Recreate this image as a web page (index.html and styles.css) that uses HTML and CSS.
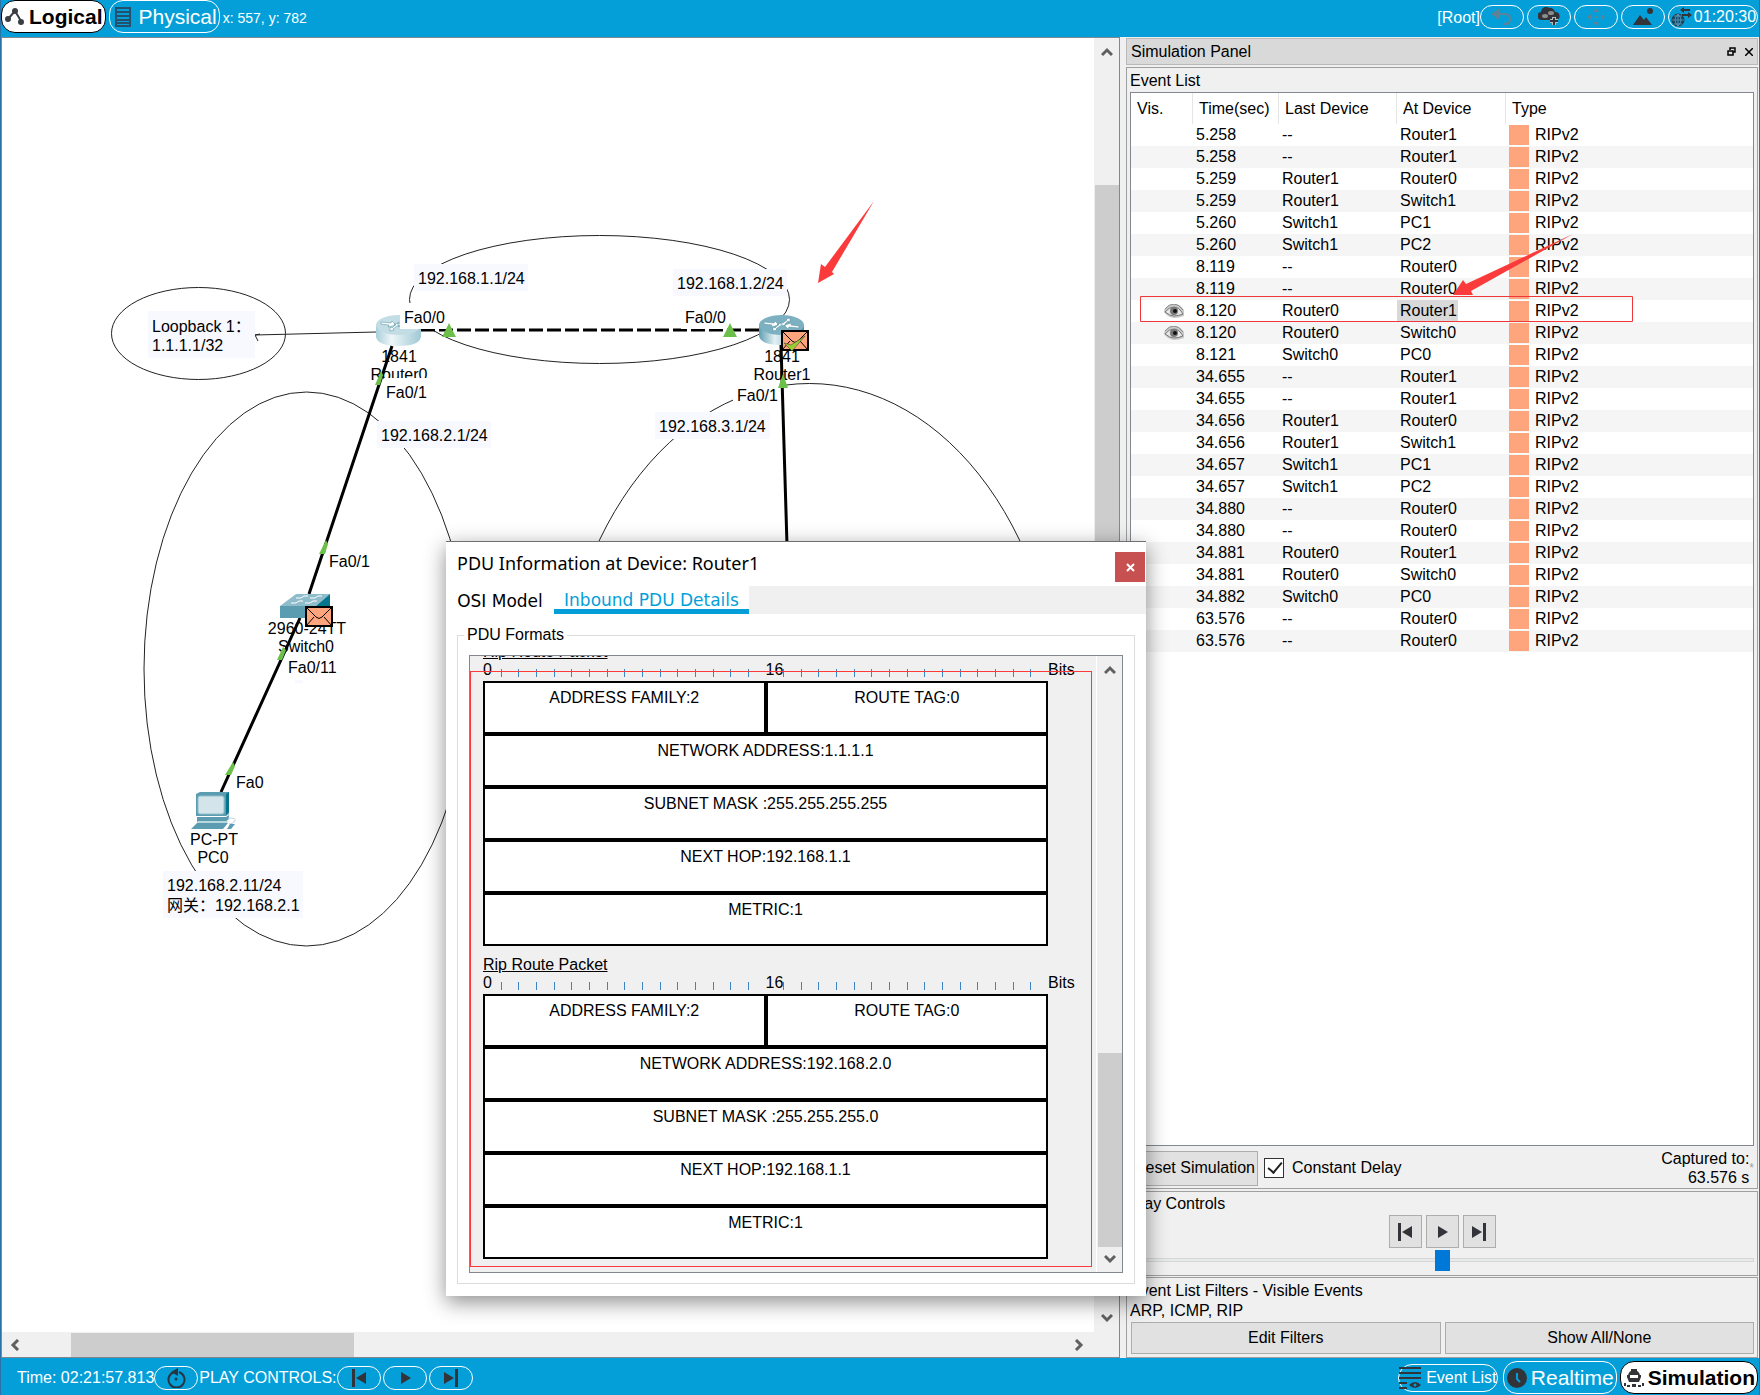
FILE: index.html
```html
<!DOCTYPE html>
<html lang="en">
<head>
<meta charset="utf-8">
<title>Simulation workspace</title>
<link rel="stylesheet" href="styles.css">
</head>
<body>
<svg class="defs" aria-hidden="true">
  <defs>
    <linearGradient id="side" x1="0" x2="1"><stop offset="0" stop-color="#5f9fb2"/><stop offset=".35" stop-color="#e4f0f4"/><stop offset=".6" stop-color="#a9cdd8"/><stop offset="1" stop-color="#4f93a8"/></linearGradient>
    <linearGradient id="side-pale" x1="0" x2="1"><stop offset="0" stop-color="#a9cfdb"/><stop offset=".35" stop-color="#eef6f8"/><stop offset=".6" stop-color="#cfe4ea"/><stop offset="1" stop-color="#a0c8d5"/></linearGradient>
  </defs>
  <symbol id="router-arrows" viewBox="0 0 45 31">
    <path d="M5 7l10 1 1-2 4 4-8 2 1-2-8-1zM40 13l-10-1-1 2-4-4 8-2-1 2 8 1zM31 3l-4 1 1 1-4 3-2-1 0 4 5-1-1-1 3-3 2 1zM14 16l4-1-1-1 4-3 2 1 0-4-5 1 1 1-3 3-2-1z" fill="#fff" stroke="#4c8ea3" stroke-width=".5"/>
  </symbol>
  <symbol id="envelope" viewBox="0 0 28 21">
    <path d="M1 1h26v19H1z" fill="#ffa57d" stroke="#000" stroke-width="2"/>
    <path d="M1 1l10 10q3 3 6 0L27 1M1 20l8-9M27 20l-8-9" fill="none" stroke="#000" stroke-width="1"/>
  </symbol>
  <symbol id="back" viewBox="0 0 16 18"><path d="M1 0h3v18H1zM15 3v12L5 9z" fill="#32343a"/></symbol>
  <symbol id="play" viewBox="0 0 16 18"><path d="M4 3v12l10-6z" fill="#32343a"/></symbol>
  <symbol id="next" viewBox="0 0 16 18"><path d="M12 0h3v18h-3zM1 3v12l10-6z" fill="#32343a"/></symbol>
  <symbol id="eye" viewBox="0 0 20 14">
    <path d="M0 6Q4 0 10 0t10 6v6q-5 2-10 2Q3 13 0 8z" fill="#c9c9c9"/>
    <path d="M1 8q4-5 9-5t9 7q-5 2-9 2T1 8z" fill="#e6e6e6" stroke="#777"/>
    <path d="M1 5q4-5 9-5t9 6" fill="none" stroke="#888"/>
    <circle cx="10" cy="7" r="4" fill="#777"/><circle cx="11" cy="7" r="2" fill="#111"/>
  </symbol>
  <symbol id="chev" viewBox="0 0 12 10"><path d="M1 8l5-5 5 5" fill="none" stroke="#606060" stroke-width="3"/></symbol>
</svg>

<header class="bar">
  <button class="mode mode-on" type="button">
    <svg width="20" height="18" viewBox="0 0 20 18"><path d="M3 11L10 3l6 10" fill="none" stroke="#3b3f45" stroke-width="2"/><circle cx="3" cy="11" r="3" fill="#3b3f45"/><circle cx="10" cy="3" r="3" fill="#3b3f45"/><circle cx="16" cy="14" r="3" fill="#3b3f45"/></svg>
    Logical</button>
  <button class="mode" type="button">
    <svg width="22" height="20" viewBox="-2 0 22 20"><path d="M1 1h14v18H1zM1 5h14M1 9h14M1 13h14M1 16h14" fill="none" stroke="#23506b" stroke-width="2"/></svg>
    Physical</button>
  <span class="coords">x: 557, y: 782</span>
  <span class="grow"></span>
  <span class="root">[Root]</span>
  <button class="pill" type="button" aria-label="Back"><svg width="22" height="18" viewBox="0 0 22 18"><path d="M8 6h6q5 0 5 5t-5 5h-2" fill="none" stroke="#5f8296" stroke-width="2"/><path d="M0 6l9-6v12z" fill="#5f8296"/></svg></button>
  <button class="pill" type="button" aria-label="New cluster"><svg width="22" height="20" viewBox="0 0 22 20"><path d="M4 13a4 4 0 0 1-1-8 5 5 0 0 1 8-4 5 5 0 0 1 6 4 4 4 0 0 1 1 8z" fill="#32343a"/><ellipse cx="7" cy="9" rx="3" ry="2" fill="#8c8c8c"/><ellipse cx="13" cy="6" rx="3" ry="2" fill="#8c8c8c"/><path d="M16 10v8M12 14h8" stroke="#bbb" stroke-width="4"/><path d="M16 11v7M12 14h8" stroke="#32343a" stroke-width="2"/></svg></button>
  <button class="pill" type="button" aria-label="Move object"><svg width="20" height="20" viewBox="0 0 20 20"><path d="M10 1l3 4H7zM10 19l3-4H7zM1 10l4-3v6zM19 10l-4-3v6zM9 9h2v2H9z" fill="#5f8296"/></svg></button>
  <button class="pill" type="button" aria-label="Set background"><svg width="20" height="18" viewBox="0 0 20 18"><path d="M0 17l7-10 4 5 2-3 6 8z" fill="#32343a"/><circle cx="17" cy="3" r="3" fill="#32343a"/></svg></button>
  <button class="pill pill-clock" type="button"><svg width="22" height="20" viewBox="0 0 22 20"><circle cx="8" cy="13" r="6" fill="#0f4b6b" stroke="#263640" stroke-width="1"/><path d="M2 13h12M8 7v12M4 9h8M4 17h8M8 7q-6 6 0 12M8 7q6 6 0 12" fill="none" stroke="#7fb6d0" stroke-width=".6"/><path d="M12 3h8M12 8h8" stroke="#32343a" stroke-width="2"/><path d="M14 0v6l-4-3zM18 5v6l4-3z" fill="#32343a"/></svg>01:20:30</button>
</header>

<main class="workspace">
  <section class="stage">
    <div class="canvas">
      <svg class="topology" width="1092" height="1294" viewBox="2 38 1092 1294">
        <g class="outline">
          <ellipse cx="198.500" cy="333.500" rx="87" ry="46"/>
          <ellipse cx="599.500" cy="299.500" rx="190" ry="64"/>
          <ellipse cx="306.500" cy="669" rx="162.500" ry="277"/>
          <ellipse cx="809.500" cy="733.500" rx="252" ry="350"/>
          <path d="M258 341l-3-6 5-1M255 335l121-3"/>
        </g>
        <g class="note">
          <path d="M148 311h107v47H148zM414 264h114v27H414zM673 269h114v27H673zM377 421h114v27H377zM655 412h115v27H655zM163 871h140v47H163zM295 680h8v3h-8z"/>
        </g>
        <!-- Router0 -->
        <g>
          <path d="M376 325v12q2 9 22.500 9T421 337v-12z" fill="url(#side-pale)"/>
          <ellipse cx="398.500" cy="325" rx="22.500" ry="10" fill="#c3dde5"/>
          <use href="#router-arrows" x="376" y="315" width="45" height="31"/>
        </g>
        <text x="399" y="362" class="mid">1841</text><text x="399" y="380" class="mid">Router0</text>
        <path class="mask" d="M384 378h48v25h-48z"/>
        <path class="cable dashed" d="M421 330h340"/>
        <path class="mask" d="M400 303h47v26h-47zM681 303h42v26h-42zM733 383h46v25h-46z"/>
        <!-- Router1 -->
        <g>
          <path d="M759 325v11q2 9 22.500 9T804 336v-11z" fill="url(#side)"/>
          <ellipse cx="781.500" cy="325" rx="22.500" ry="10" fill="#7db0c0"/>
          <use href="#router-arrows" x="759" y="315" width="45" height="31"/>
        </g>
        <text x="782" y="362" class="mid">1841</text><text x="782" y="380" class="mid">Router1</text>
        <text x="307" y="634" class="mid">2960-24TT</text><text x="306" y="652" class="mid">Switch0</text>
        <g class="cable">
          <path d="M392 346L309 594M300 618L221 792M781 345L787 545"/>
        </g>
        <g class="link-up">
          <path d="M442 337l7-14 7 14zM723 337l7-14 7 14zM375 385l6-14 2 4-3 10zM319 554l7-14 2 4-3 10zM277 660l6-13 3 3-4 10zM225 775l8-13 2 4-4 9zM778 388l5-14 5 14z"/>
        </g>
        <!-- Switch0 -->
        <path d="M280 606l16-12h34l-14 12z" fill="#8fbccb"/><path d="M280 606h36v12h-36z" fill="#5c9cb1"/><path d="M316 606l14-12v12l-14 12z" fill="#04758c"/>
        <path d="M296 598h5l3-2h4M310 598h5l3-2h4M291 603h5l3-2h4M305 603h5l3-2h4" fill="none" stroke="#fff" stroke-width="1"/>
        <use href="#envelope" x="305" y="606" width="28" height="21"/>
        <use href="#envelope" x="781" y="330" width="28" height="21"/>
        <path d="M784 343l7 2 14-9-13 15z" fill="#9acd32" stroke="#333" stroke-width=".5"/>
        <!-- PC0 -->
        <path d="M196 794l4-2h29v22l-3 2h-30z" fill="#5c9cb1"/><path d="M226 794l3-2v20l-3 3z" fill="#04758c"/>
        <rect x="198" y="796" width="26" height="18" rx="2" fill="#d3e4ea" stroke="#8fbccb"/>
        <path d="M197 817h29l3-2v4l-4 3h-28zM191 829l6-6h31l-5 6z" fill="#5c9cb1"/><path d="M197 823l1-2h30l-1 2z" fill="#b8d6df"/>
        <path d="M228 818q9 0 7 3t-6 3" fill="none" stroke="#b8d6df"/><path d="M227 829l3-5h5l-4 5z" fill="#5c9cb1"/>
        <text x="214" y="845" class="mid">PC-PT</text><text x="213" y="863" class="mid">PC0</text>

        <text x="152" y="332">Loopback 1：</text><text x="152" y="351">1.1.1.1/32</text>
        <text x="418" y="284">192.168.1.1/24</text><text x="677" y="289">192.168.1.2/24</text>
        <text x="381" y="441">192.168.2.1/24</text><text x="659" y="432">192.168.3.1/24</text>
        <text x="167" y="891">192.168.2.11/24</text><text x="167" y="911">网关：192.168.2.1</text>
        <text x="404" y="323">Fa0/0</text><text x="685" y="323">Fa0/0</text>
        <text x="386" y="398">Fa0/1</text><text x="737" y="401">Fa0/1</text>
        <text x="329" y="567">Fa0/1</text><text x="288" y="673">Fa0/11</text><text x="236" y="788">Fa0</text>
      </svg>
    </div>
    <div class="vscroll"><svg class="chev"><use href="#chev"/></svg><i class="thumb"></i><svg class="chev down"><use href="#chev"/></svg></div>
    <div class="hscroll"><svg class="chev left"><use href="#chev"/></svg><i class="thumb"></i><svg class="chev right"><use href="#chev"/></svg></div>
  </section>

  <aside class="panel">
    <div class="panel-title"><span>Simulation Panel</span>
      <button class="plain" type="button" aria-label="Float"><svg width="9" height="9" viewBox="0 0 9 9"><path d="M3 3V1h5v4H6M1 4h5v4H1z" fill="none" stroke="#000" stroke-width="1.500"/></svg></button>
      <button class="plain" type="button" aria-label="Close panel"><svg width="8" height="8" viewBox="0 0 8 8"><path d="M0 0l8 8M8 0L0 8" stroke="#000" stroke-width="1.500"/></svg></button>
    </div>

    <section class="group events">
      <h2>Event List</h2>
      <div class="list">
        <table>
          <colgroup><col class="c-vis"><col class="c-time"><col class="c-last"><col class="c-at"><col></colgroup>
          <thead><tr><th>Vis.</th><th>Time(sec)</th><th>Last Device</th><th>At Device</th><th>Type</th></tr></thead>
          <tbody>
            <tr><td></td><td>5.258</td><td>--</td><td>Router1</td><td class="type">RIPv2</td></tr>
            <tr><td></td><td>5.258</td><td>--</td><td>Router1</td><td class="type">RIPv2</td></tr>
            <tr><td></td><td>5.259</td><td>Router1</td><td>Router0</td><td class="type">RIPv2</td></tr>
            <tr><td></td><td>5.259</td><td>Router1</td><td>Switch1</td><td class="type">RIPv2</td></tr>
            <tr><td></td><td>5.260</td><td>Switch1</td><td>PC1</td><td class="type">RIPv2</td></tr>
            <tr><td></td><td>5.260</td><td>Switch1</td><td>PC2</td><td class="type">RIPv2</td></tr>
            <tr><td></td><td>8.119</td><td>--</td><td>Router0</td><td class="type">RIPv2</td></tr>
            <tr><td></td><td>8.119</td><td>--</td><td>Router0</td><td class="type">RIPv2</td></tr>
            <tr><td class="vis"><svg width="20" height="14"><use href="#eye"/></svg></td><td>8.120</td><td>Router0</td><td class="picked"><span>Router1</span></td><td class="type">RIPv2</td></tr>
            <tr><td class="vis"><svg width="20" height="14"><use href="#eye"/></svg></td><td>8.120</td><td>Router0</td><td>Switch0</td><td class="type">RIPv2</td></tr>
            <tr><td></td><td>8.121</td><td>Switch0</td><td>PC0</td><td class="type">RIPv2</td></tr>
            <tr><td></td><td>34.655</td><td>--</td><td>Router1</td><td class="type">RIPv2</td></tr>
            <tr><td></td><td>34.655</td><td>--</td><td>Router1</td><td class="type">RIPv2</td></tr>
            <tr><td></td><td>34.656</td><td>Router1</td><td>Router0</td><td class="type">RIPv2</td></tr>
            <tr><td></td><td>34.656</td><td>Router1</td><td>Switch1</td><td class="type">RIPv2</td></tr>
            <tr><td></td><td>34.657</td><td>Switch1</td><td>PC1</td><td class="type">RIPv2</td></tr>
            <tr><td></td><td>34.657</td><td>Switch1</td><td>PC2</td><td class="type">RIPv2</td></tr>
            <tr><td></td><td>34.880</td><td>--</td><td>Router0</td><td class="type">RIPv2</td></tr>
            <tr><td></td><td>34.880</td><td>--</td><td>Router0</td><td class="type">RIPv2</td></tr>
            <tr><td></td><td>34.881</td><td>Router0</td><td>Router1</td><td class="type">RIPv2</td></tr>
            <tr><td></td><td>34.881</td><td>Router0</td><td>Switch0</td><td class="type">RIPv2</td></tr>
            <tr><td></td><td>34.882</td><td>Switch0</td><td>PC0</td><td class="type">RIPv2</td></tr>
            <tr><td></td><td>63.576</td><td>--</td><td>Router0</td><td class="type">RIPv2</td></tr>
            <tr><td></td><td>63.576</td><td>--</td><td>Router0</td><td class="type">RIPv2</td></tr>
          </tbody>
        </table>
      </div>
      <div class="capture">
        <button class="push" type="button">Reset Simulation</button>
        <label class="delay"><input type="checkbox" checked>Constant Delay</label>
        <span class="grow"></span>
        <p>Captured to:<br>63.576 s</p><span class="star">*</span>
      </div>
    </section>

    <section class="group play">
      <h2>Play Controls</h2>
      <div class="steps">
        <button class="push" type="button" aria-label="Step back"><svg width="16" height="18"><use href="#back"/></svg></button>
        <button class="push" type="button" aria-label="Play"><svg width="16" height="18"><use href="#play"/></svg></button>
        <button class="push" type="button" aria-label="Step forward"><svg width="16" height="18"><use href="#next"/></svg></button>
      </div>
      <input class="speed" type="range" min="0" max="100" value="50" aria-label="Play speed">
    </section>

    <section class="group filters">
      <h2>Event List Filters - Visible Events</h2>
      <p>ARP, ICMP, RIP</p>
      <div class="pair"><button class="push" type="button">Edit Filters</button><button class="push" type="button">Show All/None</button></div>
    </section>
  </aside>
</main>

<footer class="bar bar-bottom">
  <span class="time">Time: 02:21:57.813</span>
  <button class="pill pill-cycle" type="button" aria-label="Power cycle"><svg width="20" height="20" viewBox="0 0 20 20"><path d="M8 4a8 8 0 1 0 5 0" fill="none" stroke="#263640" stroke-width="2"/><path d="M5 4l7-4v8z" fill="#263640"/><circle cx="10" cy="11" r="1.500" fill="#263640"/></svg></button>
  <span>PLAY CONTROLS:</span>
  <span class="pills">
    <button class="pill" type="button" aria-label="Back"><svg width="16" height="18"><use href="#back"/></svg></button>
    <button class="pill" type="button" aria-label="Play"><svg width="16" height="18"><use href="#play"/></svg></button>
    <button class="pill" type="button" aria-label="Forward"><svg width="16" height="18"><use href="#next"/></svg></button>
  </span>
  <span class="grow"></span>
  <button class="pill pill-list" type="button"><svg width="22" height="22" viewBox="0 0 22 22"><path d="M0 1h22M0 6h22M0 11h22M0 16h8M0 21h8" stroke="#32343a" stroke-width="2"/><path d="M10 18q6-6 12 0-6 6-12 0z" fill="#32343a"/><circle cx="16" cy="18" r="1.500" fill="#049fd9"/></svg>Event List</button>
  <button class="mode" type="button"><svg width="20" height="20" viewBox="0 0 20 20"><circle cx="10" cy="10" r="10" fill="#32343a"/><path d="M10 5v6l3 3" fill="none" stroke="#049fd9" stroke-width="2"/></svg>Realtime</button>
  <button class="mode mode-on" type="button"><svg width="20" height="20" viewBox="0 0 20 20"><path d="M7 1h6v2H7z" fill="#32343a"/><circle cx="10" cy="8" r="6" fill="#32343a"/><path d="M3 7h14v2l-2 5H5L3 9z" fill="#32343a"/><path d="M6 7h8v3H6z" fill="#fff"/><path d="M0 15h2v3H0zM18 15h2v3h-2zM3 17h3v2H3zM8 16h4v3H8zM14 17h3v2h-3z" fill="#32343a"/></svg>Simulation</button>
</footer>

<svg class="markup" width="1760" height="700" viewBox="0 0 1760 700" aria-hidden="true">
  <path d="M818 283l3-19 4 3 49-66-42 71 2 2zM1453 295l10-15 3 4 107-50-102 57 2 4z" fill="#fb3b3b"/>
  <path d="M1140.500 296.500h492v25h-492z" fill="none" stroke="#f0383c"/>
</svg>

<div class="dialog" role="dialog" aria-labelledby="pdu-title">
  <div class="dialog-head"><h1 id="pdu-title">PDU Information at Device: Router1</h1><button class="close" type="button" aria-label="Close"><svg width="9" height="9" viewBox="0 0 9 9"><path d="M1 1l7 7M8 1L1 8" stroke="#fff" stroke-width="2"/></svg></button></div>
  <div class="tabs" role="tablist"><button role="tab" type="button">OSI Model</button><button role="tab" type="button" class="tab-on" aria-selected="true">Inbound PDU Details</button></div>
  <fieldset>
    <legend>PDU Formats</legend>
    <div class="formats">
      <div class="packets">
        <section class="packet">
          <h3>Rip Route Packet</h3>
          <div class="ruler"><div class="scale"><span>0</span><span>16</span><svg class="ticks" viewBox="0 0 565 8" preserveAspectRatio="none"><path d="M18.500 0v8M35.500 0v8M53.500 0v8M71.500 0v8M88.500 0v8M106.500 0v8M124.500 0v8M141.500 0v8M159.500 0v8M177.500 0v8M194.500 0v8M212.500 0v8M230.500 0v8M247.500 0v8M265.500 0v8M300.500 0v8M318.500 0v8M335.500 0v8M353.500 0v8M371.500 0v8M388.500 0v8M406.500 0v8M424.500 0v8M441.500 0v8M459.500 0v8M477.500 0v8M494.500 0v8M512.500 0v8M530.500 0v8M547.500 0v8"/></svg></div><span>Bits</span></div>
          <div class="fields"><p>ADDRESS FAMILY:2</p><p>ROUTE TAG:0</p><p class="wide">NETWORK ADDRESS:1.1.1.1</p><p class="wide">SUBNET MASK :255.255.255.255</p><p class="wide">NEXT HOP:192.168.1.1</p><p class="wide">METRIC:1</p></div>
        </section>
        <section class="packet">
          <h3>Rip Route Packet</h3>
          <div class="ruler"><div class="scale"><span>0</span><span>16</span><svg class="ticks" viewBox="0 0 565 8" preserveAspectRatio="none"><path d="M18.500 0v8M35.500 0v8M53.500 0v8M71.500 0v8M88.500 0v8M106.500 0v8M124.500 0v8M141.500 0v8M159.500 0v8M177.500 0v8M194.500 0v8M212.500 0v8M230.500 0v8M247.500 0v8M265.500 0v8M300.500 0v8M318.500 0v8M335.500 0v8M353.500 0v8M371.500 0v8M388.500 0v8M406.500 0v8M424.500 0v8M441.500 0v8M459.500 0v8M477.500 0v8M494.500 0v8M512.500 0v8M530.500 0v8M547.500 0v8"/></svg></div><span>Bits</span></div>
          <div class="fields"><p>ADDRESS FAMILY:2</p><p>ROUTE TAG:0</p><p class="wide">NETWORK ADDRESS:192.168.2.0</p><p class="wide">SUBNET MASK :255.255.255.0</p><p class="wide">NEXT HOP:192.168.1.1</p><p class="wide">METRIC:1</p></div>
        </section>
        <i class="frame-mark"></i>
      </div>
      <div class="vscroll"><svg class="chev"><use href="#chev"/></svg><i class="thumb"></i><svg class="chev down"><use href="#chev"/></svg></div>
    </div>
  </fieldset>
</div>
</body>
</html>
```

FILE: styles.css
```css
* { box-sizing: border-box; }

body {
  margin: 0;
  min-height: 100vh;
  display: flex;
  flex-direction: column;
  position: relative;
  border: solid #2a72a8;
  border-width: 0 1px;
  background: #f0f0f0;
  color: #000;
  font: 16px/18px "Liberation Sans", "Noto Sans CJK SC", sans-serif;
}

h1, h2, h3, p { margin: 0; font-size: 16px; font-weight: 400; }
button, input { font: inherit; color: inherit; margin: 0; }
svg { display: block; flex: none; }
.defs { position: absolute; width: 0; height: 0; }
.grow { flex: 1; }

/* Blue bars */
.bar {
  height: 37px;
  display: flex;
  align-items: center;
  padding-right: 1px;
  background: #049fd9;
  color: #fff;
  white-space: nowrap;
}
.coords { padding-bottom: 2px; font-size: 14px; }
.root { padding-bottom: 2px; }
.mode {
  height: 33px;
  margin: 0 3px 4px 0;
  padding: 0 2px 0 3px;
  display: flex;
  align-items: center;
  gap: 4px;
  border: 1px solid #fff;
  border-radius: 14px;
  background: none;
  font-size: 21px;
}
.mode-on { border-color: #000; background: #fff; color: #000; font-weight: 700; }
.pill {
  width: 44px;
  height: 24px;
  margin: 0 3px 3px 0;
  padding: 0;
  display: flex;
  align-items: center;
  justify-content: center;
  border: 1px solid #fff;
  border-radius: 12px;
  background: none;
}
.pill-clock { width: 90px; gap: 2px; margin-right: 0; }
.pill-list { width: 100px; height: 28px; gap: 5px; border-radius: 14px; }
.bar-bottom { padding-top: 2px; }
.bar-bottom .mode { margin: 0 3px 0 0; }
.bar-bottom .mode:last-child { margin: 0; }
.bar-bottom .pill { margin-bottom: 0; }
.bar-bottom .pill-list { margin-right: 5px; }
.bar-bottom .pill-cycle { margin-right: 1px; }
.time { padding-left: 16px; }
.pills { display: flex; }
.pills .pill { margin-right: 2px; }

/* Workspace */
.workspace {
  flex: 1;
  display: grid;
  grid-template-columns: minmax(0, 1fr) 632px;
  gap: 6px;
  padding-right: 1px;
}
.stage {
  display: grid;
  grid-template-columns: minmax(0, 1fr) 25px;
  grid-template-rows: minmax(0, 1fr) 25px;
  border: 1px solid #828790;
}
.canvas { background: #fff; overflow: hidden; }
.topology text { font-size: 16px; }
.topology .mid { text-anchor: middle; }
.outline { fill: none; stroke: #222; stroke-width: 1; }
.note { fill: #f8f8ff; }
.mask { fill: #fff; }
.cable { fill: none; stroke: #000; stroke-width: 3; }
.dashed { stroke-dasharray: 14 4; }
.link-up { fill: #6cc04a; }

.vscroll, .hscroll { display: flex; align-items: center; background: #f0f0f0; }
.vscroll { flex-direction: column; padding: 9px 0; }
.vscroll .thumb { width: 24px; height: 600px; margin: 128px 0 auto; background: #cdcdcd; }
.hscroll { padding: 0 9px 0 7px; }
.hscroll .thumb { width: 283px; height: 24px; margin: 0 auto 0 50px; background: #cdcdcd; }
.chev { width: 12px; height: 10px; }
.down { transform: rotate(180deg); }
.left { transform: rotate(-90deg); }
.right { transform: rotate(90deg); }

/* Simulation panel */
.panel { display: flex; flex-direction: column; padding-top: 1px; }
.panel-title {
  height: 27px;
  margin-bottom: 2px;
  padding: 0 4px;
  display: flex;
  align-items: center;
  gap: 9px;
  border: 1px solid #b9b9b9;
  background: #d9d9d9;
}
.panel-title span { flex: 1; }
.plain { padding: 0; border: 0; background: none; }
.group { display: flex; flex-direction: column; border: 1px solid #a0a0a0; padding: 3px; }
.group h2 { line-height: 19px; }
.events { flex: 1; margin-bottom: 2px; padding-bottom: 1px; }
.events h2 { margin-bottom: 2px; }
.list { flex: 1; border: 1px solid #828790; background: #fff; }
table { width: 100%; table-layout: fixed; border-collapse: separate; border-spacing: 0; }
.c-vis { width: 62px; }
.c-time { width: 86px; }
.c-last { width: 118px; }
.c-at { width: 109px; }
th { height: 31px; padding: 0 0 0 6px; text-align: left; font-weight: 400; border-right: 1px solid #e5e5e5; }
th:last-child { border: 0; }
td { height: 22px; padding: 0 0 0 3px; }
tbody tr:nth-child(even) { background: #f5f5f5; }
.vis svg { margin-left: 30px; }
.picked { padding: 0; }
.picked span { display: block; width: 61px; padding-left: 3px; line-height: 22px; background: #d9d9d9; }
.type::before { content: ""; float: left; width: 20px; height: 20px; margin-right: 6px; background: #ffa57d; }
.type { line-height: 20px; }
.push { padding: 0; border: 1px solid #adadad; background: #e1e1e1; }
.capture { display: flex; align-items: center; padding-top: 3px; }
.capture .push { width: 127px; height: 35px; margin-left: 1px; }
.capture p { text-align: right; line-height: 19px; }
.delay { display: flex; align-items: center; gap: 8px; padding-left: 6px; }
.delay input {
  appearance: none;
  width: 20px;
  height: 20px;
  border: 1px solid #333;
  background: #fff;
}
.delay input:checked::after {
  content: "";
  display: block;
  width: 6px;
  height: 12px;
  margin: 0 0 0 6px;
  border: solid #222;
  border-width: 0 2px 2px 0;
  transform: rotate(40deg);
}
.star { color: #a0a0a0; font-size: 12px; }
.play { height: 85px; margin-bottom: 1px; padding-top: 2px; }
.steps { display: flex; justify-content: center; gap: 4px; padding: 2px 0 1px; }
.steps .push { width: 33px; height: 33px; display: flex; align-items: center; justify-content: center; }
.speed { appearance: none; width: 100%; height: 22px; background: none; }
.speed::-webkit-slider-runnable-track { height: 4px; border: 1px solid #d6d6d6; background: #e7eaea; }
.speed::-webkit-slider-thumb { appearance: none; width: 15px; height: 21px; margin-top: -9px; background: #0078d7; }
.filters p { line-height: 21px; }
.pair { display: grid; grid-template-columns: 1fr 1fr; gap: 4px; padding: 1px 0 0 1px; }
.pair .push { height: 32px; }

/* Hand-drawn arrows and highlight over the panes */
.markup { position: absolute; top: 0; left: -1px; pointer-events: none; }

/* PDU dialog */
.dialog {
  position: absolute;
  left: 445px;
  top: 541px;
  width: 700px;
  background: #fff;
  border-top: 1px solid #707070;
  box-shadow: 0 6px 20px rgba(0, 0, 0, .45);
}
.dialog-head { display: flex; justify-content: space-between; padding: 10px 1px 4px 11px; }
.dialog-head h1 { font: 18px/22px "Noto Sans", sans-serif; }
.close { width: 30px; height: 30px; padding: 0; border: 0; background: #c75050; display: flex; align-items: center; justify-content: center; }
.tabs { display: flex; height: 28px; background: #f0f0f0; font: 17px/18px "DejaVu Sans", sans-serif; }
.tabs button { width: 108px; padding: 1px 0 0; border: 0; background: #fff; }
.tabs .tab-on { width: 195px; padding-top: 5px; border-bottom: 5px solid #049fd9; color: #049fd9; }
fieldset { margin: 11px 11px 12px; padding: 10px 11px 10px; border: 1px solid #dcdcdc; min-width: 0; }
legend { margin-left: -5px; padding: 0 3px; line-height: 20px; }
.formats { display: flex; height: 618px; border: 1px solid #828790; background: #f0f0f0; }
.packets {
  position: relative;
  flex: 1;
  display: flex;
  flex-direction: column;
  justify-content: flex-end;
  gap: 8px;
  overflow: hidden;
  padding: 0 48px 13px 13px;
  border-right: 1px solid #fff;
}
.packet { flex: none; }
.packet h3 { height: 20px; line-height: 22px; text-decoration: underline; }
.ruler { display: flex; height: 20px; margin-right: -36px; line-height: 18px; }
.scale { flex: 1; display: grid; grid-template-columns: 1fr 1fr; grid-template-rows: 16px 4px; }
.ruler > span { width: 36px; }
.ticks { grid-column: 1 / -1; width: 100%; height: 8px; margin-top: -8px; }
.ticks path { stroke: #3c85c4; }
.fields { display: grid; grid-template-columns: 1fr 1fr; }
.fields p { height: 53px; padding-top: 6px; border: 2px solid #000; background: #fff; text-align: center; }
.fields .wide { grid-column: 1 / -1; }
.frame-mark { position: absolute; top: 15px; right: 4px; bottom: 5px; left: 0; border: 1px solid #fb3b3b; }
.formats .vscroll { width: 25px; padding-bottom: 8px; }
.formats .thumb { height: 194px; margin: auto 0 7px; }
```
